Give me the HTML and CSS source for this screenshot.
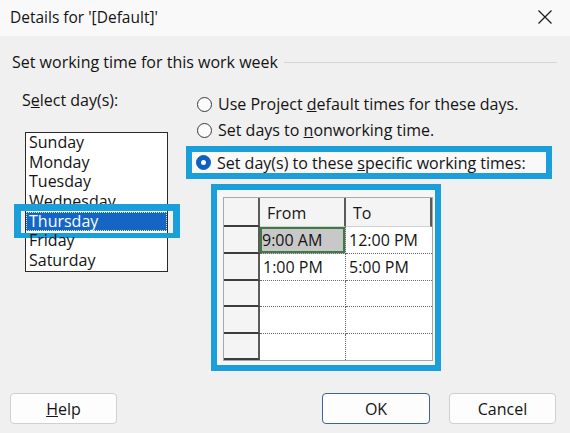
FILE: index.html
```html
<!DOCTYPE html>
<html>
<head>
<meta charset="utf-8">
<link rel="stylesheet" href="styles.css">
</head>
<body>
<div class="dialog">
  <div class="titlebar">
    <span class="title">Details for '[Default]'</span>
    <svg class="close" width="16" height="16" viewBox="0 0 16 16"><path d="M1.5 1.5 L14.5 14.5 M14.5 1.5 L1.5 14.5" stroke="#1a1a1a" stroke-width="1.2" fill="none"/></svg>
  </div>
  <div class="section">
    <span>Set working time for this work week</span>
    <span class="rule"></span>
  </div>
  <div class="main">
    <div class="left">
      <div class="label">S<u>e</u>lect day(s):</div>
      <div class="listbox">
        <div class="item">Sunday</div>
        <div class="item">Monday</div>
        <div class="item">Tuesday</div>
        <div class="item">Wednesday</div>
        <div class="item selected"><span class="focus">Thursday</span><span class="mark mark-day"></span></div>
        <div class="item">Friday</div>
        <div class="item">Saturday</div>
      </div>
    </div>
    <div class="right">
      <div class="radio-row first"><span class="radio"></span><span class="rtext">Use Project <u>d</u>efault times for these days.</span></div>
      <div class="radio-row"><span class="radio"></span><span class="rtext">Set days to <u>n</u>onworking time.</span></div>
      <div class="radio-row boxed"><span class="radio on"></span><span class="rtext">Set day(s) to these <u>s</u>pecific working times:</span></div>
      <div class="table-box">
        <div class="grid">
          <div class="c hdr rh"></div>
          <div class="c hdr col1">From</div>
          <div class="c hdr col2">To</div>

          <div class="c rh"></div>
          <div class="c d col1 sel">9:00 AM</div>
          <div class="c d col2">12:00 PM</div>

          <div class="c rh"></div>
          <div class="c d col1">1:00 PM</div>
          <div class="c d col2">5:00 PM</div>

          <div class="c rh"></div>
          <div class="c d col1"></div>
          <div class="c d col2"></div>

          <div class="c rh"></div>
          <div class="c d col1"></div>
          <div class="c d col2"></div>

          <div class="c rh last"></div>
          <div class="c d col1 last"></div>
          <div class="c d col2 last"></div>
        </div>
      </div>
    </div>
  </div>
  <div class="footer">
    <button class="btn help"><u>H</u>elp</button>
    <button class="btn ok">OK</button>
    <button class="btn cancel">Cancel</button>
  </div>
</div>
</body>
</html>
```

FILE: styles.css
```css
* { box-sizing: border-box; }
html, body { margin: 0; padding: 0; }
body {
  width: 570px;
  height: 433px;
  overflow: hidden;
  background: #f0f0f0;
  font-family: "Open Sans", "Noto Sans", sans-serif;
  font-size: 16px;
  color: #141414;
}
.dialog { width: 570px; height: 433px; display: flex; flex-direction: column; }
.titlebar {
  height: 36px;
  background: #f9f9f9;
  display: flex;
  align-items: center;
  justify-content: space-between;
  padding: 0 17px 2px 10px;
}
.title { font-size: 15.5px; }
.close { display: block; }
.section {
  margin-top: 16px;
  height: 20px;
  line-height: 20px;
  display: flex;
  align-items: center;
  padding-left: 12px;
  padding-right: 13px;
}
.section .rule { flex: 1; height: 1px; background: #d6d6d6; margin-left: 6px; margin-top: 1px; }
.main { display: flex; }
.left { width: 186px; padding-left: 22px; }
.label { margin-top: 18px; line-height: 20px; }
.listbox {
  margin-top: 22px;
  margin-left: 3px;
  width: 143px;
  height: 140px;
  border: 1px solid #2a2a2a;
  background: #fff;
}
.item { height: 19.7px; line-height: 19.7px; padding-left: 3px; white-space: nowrap; position: relative; }
.item.selected { background: #1565c4; color: #fff; padding-left: 0; }
.focus { display: block; height: 100%; border: 1px dotted #d8e6f8; padding-left: 2px; line-height: 17px; }
.mark { position: absolute; border: 7px solid #1a9fdb; pointer-events: none; }
.mark-day { left: -12px; right: -13px; top: -8px; bottom: -7px; border-bottom-width: 5px; }
.right { flex: 1; }
.radio-row { height: 26px; display: flex; align-items: center; padding-left: 11px; white-space: nowrap; }
.radio-row.first { margin-top: 19px; }
.radio {
  width: 15px; height: 15px; border-radius: 50%;
  border: 1px solid #3a3a3a;
  background: #fbfbfb;
  margin-right: 6px;
  flex: none;
}
.radio.on { background: #0d5fc2; border-color: #0d5fc2; position: relative; }
.radio.on::after {
  content: ""; position: absolute; left: 4px; top: 4px; width: 5px; height: 5px; border-radius: 50%; background: #fff;
}
.radio-row.boxed {
  margin-top: 3px;
  height: 33px;
  width: 366px;
  border: 6px solid #1a9fdb;
  background: #f9f9f9;
  padding-left: 4px;
}
.table-box {
  margin-top: 5px;
  margin-left: 25px;
  width: 230px;
  height: 187px;
  border: 6px solid #1a9fdb;
  padding: 7px 2px 4px 6px;
  background: #f6f6f6;
}
.grid {
  display: grid;
  grid-template-columns: 36px 86px 86px;
  grid-template-rows: 29px 27px 27px 26px 27px 26px;
  border: 1px solid #a8a8a8;
  background: #fff;
  width: 210px;
  height: 164px;
}
.c { line-height: 26px; white-space: nowrap; }
.hdr { background: #f4f4f4; border-bottom: 1px solid #d2d2d2; border-right: 2px solid #5a5a5a; padding-top: 2px; }
.hdr.col1 { padding-left: 7px; }
.hdr.col2 { padding-left: 7px; }
.rh { background: #f4f4f4; border-right: 2px solid #5a5a5a; border-bottom: 2px solid #3d3d3d; }
.hdr.rh { border-bottom: 2px solid #3d3d3d; }
.rh.last { border-bottom: 2px solid #3d3d3d; }
.d { border-bottom: 1px dotted #6a6a6a; padding-left: 3px; }
.d.col1 { border-right: 1px dotted #6a6a6a; }
.d.last { border-bottom: none; }
.sel { background: #c8c8c8; box-shadow: inset 0 0 0 2px #3d7a44; padding-left: 2px; }
.footer { margin-top: 22px; display: flex; padding: 0 14px 0 10px; }
.btn {
  height: 31px;
  width: 107px;
  border: 1px solid #d0d0d0;
  border-radius: 4px;
  background: #fdfdfd;
  font-family: inherit;
  font-size: 16px;
  color: #141414;
  padding: 0;
}
.btn.ok { margin-left: auto; width: 108px; border-color: #3a6595; }
.btn.cancel { margin-left: 19px; }
```
